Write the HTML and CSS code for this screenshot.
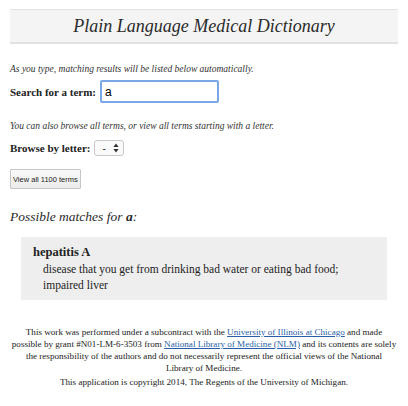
FILE: index.html
```html
<!DOCTYPE html>
<html lang="en">
<head>
    <meta charset="UTF-8">
    <meta name="viewport" content="width=device-width, initial-scale=1.0">
    <title>Plain Language Medical Dictionary</title>
    <link rel="stylesheet" href="styles.css">
</head>
<body>
    <div class="page">
        <h1 class="title">Plain Language Medical Dictionary</h1>

        <p class="hint">As you type, matching results will be listed below automatically.</p>
        <div class="row">
            <label for="term">Search for a term:</label>
            <input type="text" id="term" class="term-input" value="a">
        </div>

        <p class="hint hint-browse">You can also browse all terms, or view all terms starting with a letter.</p>
        <div class="row row-browse">
            <label for="letter">Browse by letter:</label>
            <span class="letter-select">
                <span>-</span>
                <svg width="6" height="10" viewBox="0 0 6 10"><path d="M3 0.5 L5.6 4 H0.4 Z M3 9.5 L5.6 6 H0.4 Z" fill="#333"/></svg>
            </span>
        </div>
        <button type="button" class="view-all">View all 1100 terms</button>

        <h2 class="matches">Possible matches for <b>a</b>:</h2>
        <div class="result">
            <div class="result-term">hepatitis A</div>
            <div class="result-def">disease that you get from drinking bad water or eating bad food; impaired liver</div>
        </div>

        <div class="footer">
            <p>This work was performed under a subcontract with the <a href="#">University of Illinois at Chicago</a> and made<br>
            possible by grant #N01-LM-6-3503 from <a href="#">National Library of Medicine (NLM)</a> and its contents are solely the responsibility of the authors and do not necessarily represent the official views of the National<br>
            Library of Medicine.</p>
            <p>This application is copyright 2014, The Regents of the University of Michigan.</p>
        </div>
    </div>
</body>
</html>
```

FILE: styles.css
```css
body {
    font-family: 'Liberation Serif', 'Times New Roman', serif;
    background-color: #fff;
    margin: 0;
    padding: 0;
    color: #222;
}
.page {
    padding: 9px 10px 0;
}
.title {
    margin: 0;
    background-color: #f4f4f4;
    border-top: 1px solid #e2e2e2;
    border-bottom: 2px solid #e2e2e2;
    text-align: center;
    font-style: italic;
    font-weight: normal;
    font-size: 18px;
    line-height: 32px;
    color: #2a2a2a;
}
.hint {
    font-style: italic;
    font-size: 9.5px;
    margin: 20px 0 6px;
    color: #333;
}
.hint-browse {
    margin-top: 18px;
    margin-bottom: 9px;
}
.row {
    display: flex;
    align-items: center;
    gap: 4px;
}
label {
    font-weight: bold;
    font-size: 11px;
}
.term-input {
    width: 109px;
    height: 17px;
    padding: 1px 3px;
    margin: 0;
    border: 2px solid #7aa8e6;
    border-radius: 2px;
    font-family: 'Liberation Sans', Arial, sans-serif;
    font-size: 12px;
    outline: none;
}
.letter-select {
    display: flex;
    align-items: center;
    gap: 7px;
    height: 14px;
    padding: 0 4px 0 7px;
    border: 1px solid #c8c8c8;
    border-radius: 3px;
    font-family: 'Liberation Sans', Arial, sans-serif;
    font-size: 10px;
    background: #fafafa;
}
.view-all {
    display: block;
    margin-top: 13px;
    padding: 0 2px;
    height: 20px;
    border: 1px solid #c6c6c6;
    border-radius: 1px;
    background: linear-gradient(#fafafa, #ececec);
    font-family: 'Liberation Sans', Arial, sans-serif;
    font-size: 7.5px;
    color: #222;
}
.matches {
    font-style: italic;
    font-weight: normal;
    font-size: 13.5px;
    margin: 20px 0 12px;
    color: #2a2a2a;
}
.result {
    margin: 0 11px;
    background-color: #eeeeee;
    padding: 7px 12px 7px;
}
.result-term {
    font-weight: bold;
    font-size: 12.5px;
    line-height: 17px;
}
.result-def {
    font-size: 11.5px;
    line-height: 16px;
    padding-left: 10px;
}
.footer {
    text-align: center;
    font-size: 9.1px;
    line-height: 12px;
    margin-top: 26px;
}
.footer p {
    margin: 0 0 2px;
}
.footer a {
    color: #2b5ea8;
}
```
